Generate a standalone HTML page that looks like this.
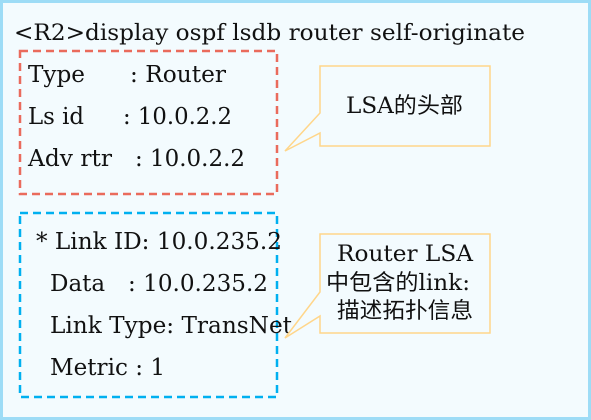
<!DOCTYPE html>
<html><head><meta charset="utf-8"><style>
html,body{margin:0;padding:0;background:#fff}
svg{display:block}
text{font-family:"DejaVu Serif","Liberation Serif","Noto Serif CJK SC",serif;fill:#111;font-size:23px}
.c{font-family:"DejaVu Serif","Noto Sans CJK SC",serif;font-size:22px}
</style></head><body>
<svg width="591" height="420" viewBox="0 0 591 420" xmlns="http://www.w3.org/2000/svg">
<rect x="1.5" y="1.5" width="588" height="417" fill="#f3fbfe" stroke="#9ddcf6" stroke-width="3"/>
<text x="14" y="40" textLength="511" lengthAdjust="spacingAndGlyphs" style="font-size:22.5px">&lt;R2&gt;display ospf lsdb router self-originate</text>
<rect x="20" y="51" width="257" height="143" fill="none" stroke="#ea6b5c" stroke-width="2.5" stroke-dasharray="8,5"/>
<text x="28" y="82" textLength="57" lengthAdjust="spacingAndGlyphs">Type</text><text x="130" y="82" textLength="96" lengthAdjust="spacingAndGlyphs">: Router</text>
<text x="28" y="124" textLength="56" lengthAdjust="spacingAndGlyphs">Ls id</text><text x="123" y="124" textLength="109" lengthAdjust="spacingAndGlyphs">: 10.0.2.2</text>
<text x="28" y="166" textLength="84" lengthAdjust="spacingAndGlyphs">Adv rtr</text><text x="135" y="166" textLength="110" lengthAdjust="spacingAndGlyphs">: 10.0.2.2</text>
<rect x="20" y="213" width="257" height="184" fill="none" stroke="#00b0f0" stroke-width="2.5" stroke-dasharray="8,5"/>
<text x="36" y="249" textLength="246" lengthAdjust="spacingAndGlyphs">* Link ID: 10.0.235.2</text>
<text x="50" y="291">Data</text><text x="128" y="291" textLength="140" lengthAdjust="spacingAndGlyphs">: 10.0.235.2</text>
<text x="50" y="333" textLength="242" lengthAdjust="spacingAndGlyphs">Link Type: TransNet</text>
<text x="50" y="375" textLength="115" lengthAdjust="spacingAndGlyphs">Metric : 1</text>
<path d="M320,66 H490 V146 H320 V133 L285,151 L320,113 Z" fill="#f3fbfe" stroke="#ffd68a" stroke-width="1.5"/>
<text class="c" x="346" y="113" textLength="117" lengthAdjust="spacingAndGlyphs">LSA的头部</text>
<path d="M320,234 H490 V333 H320 V316 L285,338 L320,292 Z" fill="#f3fbfe" stroke="#ffd68a" stroke-width="1.5"/>
<text class="c" x="337" y="261" textLength="136" lengthAdjust="spacingAndGlyphs">Router LSA</text>
<text class="c" x="326" y="290" textLength="144" lengthAdjust="spacingAndGlyphs">中包含的link:</text>
<text class="c" x="337" y="318" textLength="136" lengthAdjust="spacingAndGlyphs">描述拓扑信息</text>
</svg>
</body></html>
